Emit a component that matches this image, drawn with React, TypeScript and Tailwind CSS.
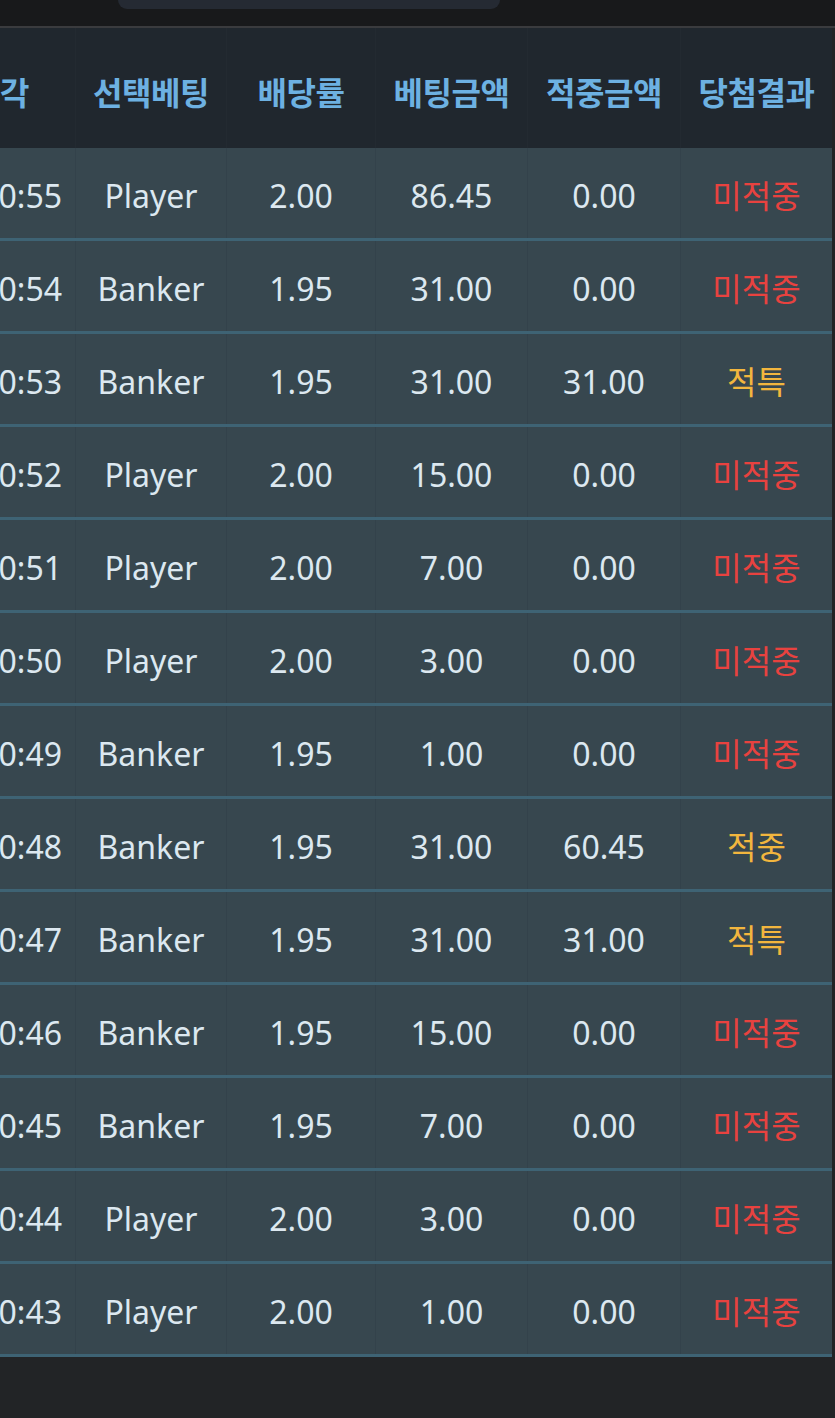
import React from "react"

const rows = [
  ["20:10:55", "Player", "2.00", "86.45", "0.00", "미적중"],
  ["20:10:54", "Banker", "1.95", "31.00", "0.00", "미적중"],
  ["20:10:53", "Banker", "1.95", "31.00", "31.00", "적특"],
  ["20:10:52", "Player", "2.00", "15.00", "0.00", "미적중"],
  ["20:10:51", "Player", "2.00", "7.00", "0.00", "미적중"],
  ["20:10:50", "Player", "2.00", "3.00", "0.00", "미적중"],
  ["20:10:49", "Banker", "1.95", "1.00", "0.00", "미적중"],
  ["20:10:48", "Banker", "1.95", "31.00", "60.45", "적중"],
  ["20:10:47", "Banker", "1.95", "31.00", "31.00", "적특"],
  ["20:10:46", "Banker", "1.95", "15.00", "0.00", "미적중"],
  ["20:10:45", "Banker", "1.95", "7.00", "0.00", "미적중"],
  ["20:10:44", "Player", "2.00", "3.00", "0.00", "미적중"],
  ["20:10:43", "Player", "2.00", "1.00", "0.00", "미적중"],
]

const headers = ["베팅시각", "선택베팅", "배당률", "베팅금액", "적중금액", "당첨결과"]

const cols = "grid grid-cols-[210px_151px_149px_152px_153px_152px]"

export default function App() {
  return (
    <div
      className="w-[835px] h-[1418px] bg-[#222426] flex flex-col overflow-hidden"
      style={{ fontFamily: '"Noto Sans", "Noto Sans CJK KR", sans-serif' }}
    >
      {/* top bar */}
      <div className="h-[28px] bg-[#18191b] border-b-2 border-[#3a3b3e] shrink-0">
        <div className="ml-[118px] w-[382px] h-[9px] rounded-b-[22px] bg-[#252a33]" />
      </div>

      {/* table, scrolled sideways so the first column is cut */}
      <div className="w-[833px] overflow-hidden shrink-0">
        <div className="-ml-[135px] w-[967px]">
          <div className={`${cols} h-[120px] bg-[#20272e]`}>
            {headers.map((h, i) => (
              <div
                key={h}
                className={`flex items-center pt-[10px] whitespace-nowrap text-[32px] font-bold text-[#6db1e2] tracking-[-0.5px] ${
                  i === 0 ? "justify-end pr-[46px]" : "justify-center border-l border-[#232a31]"
                }`}
              >
                {h}
              </div>
            ))}
          </div>

          {rows.map((r, ri) => (
            <div key={ri} className={`${cols} h-[93px] bg-[#37474f] border-b-[3px] border-[#3e6374]`}>
              {r.map((c, i) => {
                let color = "text-[#dce8f0]"
                if (i === 5) color = c === "미적중" ? "text-[#e8423f]" : "text-[#f2b63e]"
                return (
                  <div
                    key={i}
                    className={`flex items-center pt-[6px] whitespace-nowrap text-[32px] ${color} ${
                      i === 0 ? "justify-end pr-[13px]" : "justify-center border-l border-[#33424b]"
                    }`}
                  >
                    {c}
                  </div>
                )
              })}
            </div>
          ))}
        </div>
      </div>
    </div>
  )
}
